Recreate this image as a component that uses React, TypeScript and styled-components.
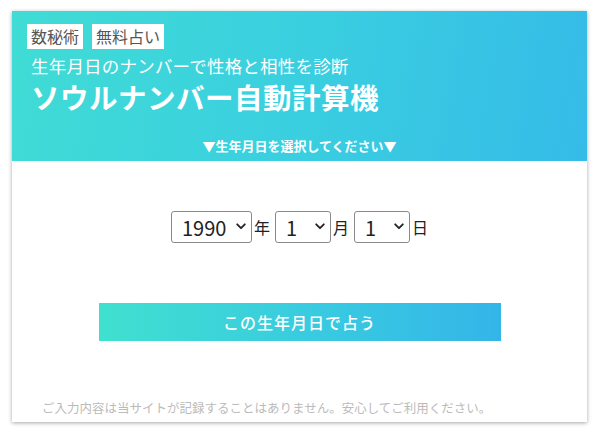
import styled, { createGlobalStyle } from "styled-components"

const Global = createGlobalStyle`
  body {
    margin: 0;
    background: #fff;
    font-family: "Noto Sans CJK JP", "Noto Sans", sans-serif;
  }
`

const Page = styled.div`
  padding: 11px 13px 12px 12px;
`

const Card = styled.div`
  width: 575px;
  background: #fff;
  box-shadow: 0 1px 4px rgba(0, 0, 0, 0.35);
`

const Header = styled.div`
  background: linear-gradient(100deg, #40dcd5 0%, #3acfe0 50%, #35bbe8 100%);
  height: 150px;
  box-sizing: border-box;
  padding: 13px 15px 0;
  color: #fff;
  display: flex;
  flex-direction: column;
`

const Tags = styled.div`
  display: flex;
  gap: 9px;
`

const Tag = styled.span`
  background: #fff;
  color: #555;
  font-size: 16px;
  height: 25px;
  line-height: 25px;
  padding: 0 4px;
`

const Lead = styled.div`
  margin-top: 6px;
  padding-left: 4px;
  font-size: 17.5px;
  line-height: 22px;
  letter-spacing: 0.2px;
`

const Title = styled.h1`
  margin: 3px 0 0;
  padding-left: 4px;
  font-size: 28.5px;
  line-height: 34px;
  font-weight: 700;
  letter-spacing: 0.5px;
`

const Prompt = styled.div`
  margin-top: 24px;
  text-align: center;
  font-size: 13px;
  font-weight: 700;
  line-height: 16px;
`

const Body = styled.div`
  display: flex;
  flex-direction: column;
  align-items: center;
  padding-top: 50px;
`

const DateRow = styled.div`
  display: flex;
  align-items: center;
  height: 32px;
`

const SelectWrap = styled.span<{ w: number }>`
  position: relative;
  display: inline-block;
  width: ${({ w }) => w}px;
  height: 32px;
`

const Select = styled.select`
  appearance: none;
  width: 100%;
  height: 100%;
  box-sizing: border-box;
  border: 1px solid #8a8a8a;
  border-radius: 3px;
  background: #fff;
  font-family: "Noto Sans CJK JP", "Noto Sans", sans-serif;
  font-size: 20px;
  color: #222;
  padding: 0 0 0 10px;
  outline: none;
`

const Chevron = styled.svg`
  position: absolute;
  right: 6px;
  top: 12px;
  width: 10px;
  height: 7px;
  pointer-events: none;
`

const Unit = styled.span<{ gap?: number }>`
  font-size: 16px;
  color: #222;
  margin: 0 ${({ gap }) => gap ?? 5}px 0 2px;
`

const Submit = styled.button`
  margin-top: 60px;
  width: 402px;
  height: 38px;
  border: none;
  background: linear-gradient(90deg, #40e0d0 0%, #38c8e2 60%, #34b5e8 100%);
  color: #fff;
  font-family: "Noto Sans CJK JP", "Noto Sans", sans-serif;
  font-size: 16px;
  font-weight: 500;
  letter-spacing: 1px;
  cursor: pointer;
`

const Note = styled.p`
  margin: 59px 0 0;
  padding: 0 0 6px 30px;
  font-size: 12.5px;
  line-height: 16px;
  color: #bbb;
`

const years = Array.from({ length: 100 }, (_, i) => 1930 + i)
const months = Array.from({ length: 12 }, (_, i) => i + 1)
const days = Array.from({ length: 31 }, (_, i) => i + 1)

function Picker({ w, value, options }: { w: number; value: number; options: number[] }) {
  return (
    <SelectWrap w={w}>
      <Select defaultValue={value}>
        {options.map((o) => (
          <option key={o} value={o}>{o}</option>
        ))}
      </Select>
      <Chevron viewBox="0 0 10 7">
        <path d="M1.2 1.3 L5 5.2 L8.8 1.3" fill="none" stroke="#222" strokeWidth="1.8" strokeLinecap="round" strokeLinejoin="round" />
      </Chevron>
    </SelectWrap>
  )
}

export default function App() {
  return (
    <Page>
      <Global />
      <Card>
        <Header>
          <Tags>
            <Tag>数秘術</Tag>
            <Tag>無料占い</Tag>
          </Tags>
          <Lead>生年月日のナンバーで性格と相性を診断</Lead>
          <Title>ソウルナンバー自動計算機</Title>
          <Prompt>▼生年月日を選択してください▼</Prompt>
        </Header>
        <Body>
          <DateRow>
            <Picker w={81} value={1990} options={years} />
            <Unit>年</Unit>
            <Picker w={56} value={1} options={months} />
            <Unit>月</Unit>
            <Picker w={56} value={1} options={days} />
            <Unit gap={0}>日</Unit>
          </DateRow>
          <Submit>この生年月日で占う</Submit>
        </Body>
        <Note>ご入力内容は当サイトが記録することはありません。安心してご利用ください。</Note>
      </Card>
    </Page>
  )
}
